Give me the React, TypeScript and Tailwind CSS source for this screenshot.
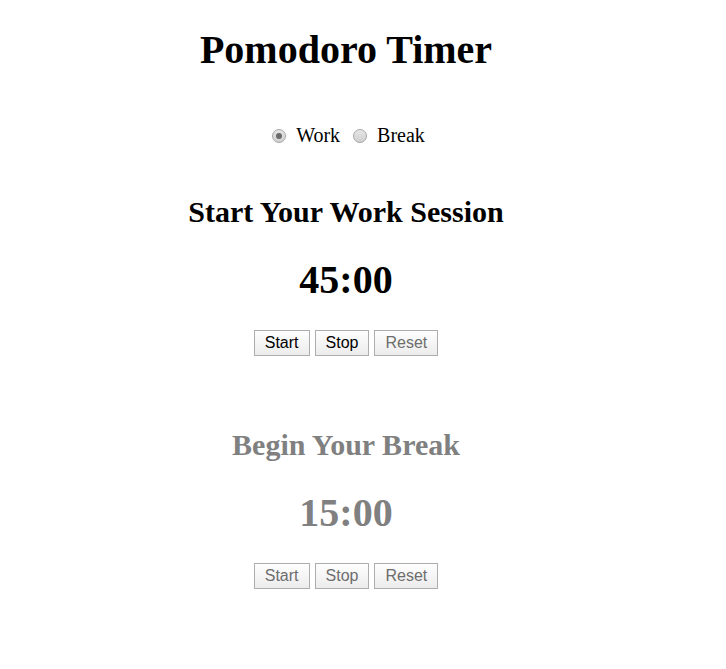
import { useState } from "react";

const serif = { fontFamily: '"Liberation Serif", "Times New Roman", serif' };

const Radio = ({ checked, label, onClick }: { checked: boolean; label: string; onClick: () => void }) => (
  <label className="inline-flex items-center cursor-pointer" onClick={onClick}>
    <span className="mr-[10px] w-[14px] h-[14px] rounded-full border border-[#a6a6a6] bg-gradient-to-b from-[#e6e6e6] to-[#d0d0d0] flex items-center justify-center">
      {checked && <span className="w-[6px] h-[6px] rounded-full bg-[#6b6b6b]" />}
    </span>
    <span className="text-[20px] leading-[23px] text-black">{label}</span>
  </label>
);

const Btn = ({ children, dim }: { children: string; dim?: boolean }) => (
  <button
    className={`h-[26px] px-[10px] text-[16px] leading-[18px] border border-[#adadad] bg-gradient-to-b from-[#fefefe] to-[#ececec] ${
      dim ? "text-[#6d6d6d]" : "text-black"
    }`}
    style={{ fontFamily: '"Liberation Sans", Arial, sans-serif' }}
  >
    {children}
  </button>
);

const Session = ({
  title,
  time,
  muted,
  mt,
}: {
  title: string;
  time: string;
  muted: boolean;
  mt: string;
}) => (
  <div className={`flex flex-col items-center ${mt}`}>
    <h2 className={`text-[30px] leading-[34px] font-bold ${muted ? "text-[#808080]" : "text-black"}`}>{title}</h2>
    <div className={`mt-[28px] text-[40px] leading-[46px] font-bold ${muted ? "text-[#808080]" : "text-black"}`}>{time}</div>
    <div className="mt-[27px] flex gap-[5px]">
      <Btn dim={muted}>Start</Btn>
      <Btn dim={muted}>Stop</Btn>
      <Btn dim>Reset</Btn>
    </div>
  </div>
);

export default function App() {
  const [mode, setMode] = useState<"work" | "break">("work");
  return (
    <div className="min-h-[669px] bg-white" style={serif}>
      <div className="w-[692px] flex flex-col items-center pt-[27px]">
        <h1 className="text-[40px] leading-[46px] font-bold text-black">Pomodoro Timer</h1>
        <div className="mt-[51px] flex items-center gap-[13px] pl-[5px]">
          <Radio checked={mode === "work"} label="Work" onClick={() => setMode("work")} />
          <Radio checked={mode === "break"} label="Break" onClick={() => setMode("break")} />
        </div>
        <Session title="Start Your Work Session" time="45:00" muted={false} mt="mt-[48px]" />
        <Session title="Begin Your Break" time="15:00" muted mt="mt-[72px]" />
      </div>
    </div>
  );
}
